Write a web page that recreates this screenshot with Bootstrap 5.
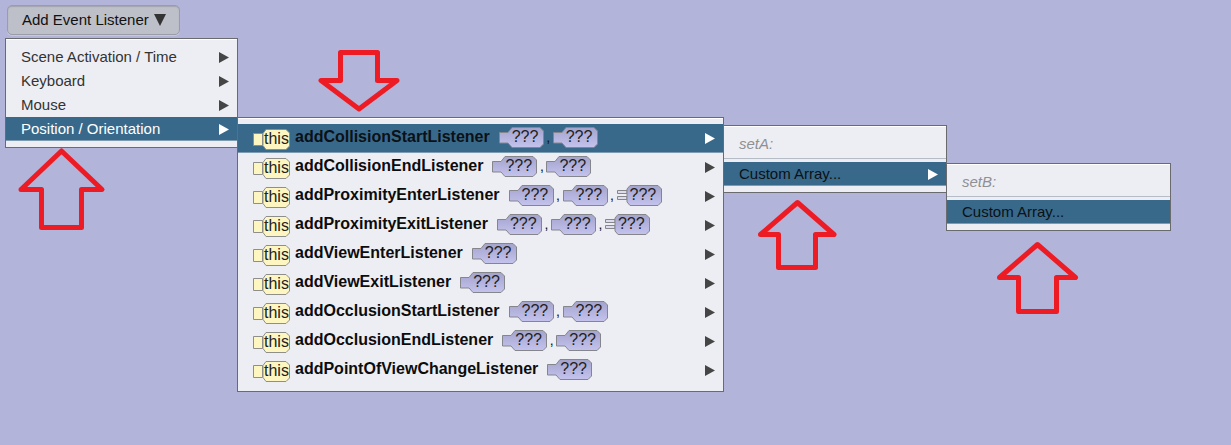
<!DOCTYPE html>
<html lang="en">
<head>
<meta charset="utf-8">
<meta name="viewport" content="width=device-width, initial-scale=1">
<title>Add Event Listener</title>
<link href="https://cdn.jsdelivr.net/npm/bootstrap@5.3.0/dist/css/bootstrap.min.css" rel="stylesheet">
<style>
  body { background: #b2b4da; font: 15px/24px "Liberation Sans", Arial, sans-serif; color: #333; }
  .workspace { padding: 5px; min-height: 100vh; }
  .event-btn { --bs-btn-padding-x: 14px; --bs-btn-padding-y: 0; --bs-btn-font-size: 15px; --bs-btn-line-height: 28px;
    --bs-btn-color: #111; --bs-btn-bg: #bdc0c9; --bs-btn-border-color: #9a9ca6; --bs-btn-border-radius: 5px;
    margin: 0 2px 3px; padding-right: 13px; gap: 5px; box-shadow: inset 0 1px 1px #a3a5ae, 0 1px 0 #c6c8e4; }
  .cascade { flex: none; padding: 6px 0; background: #edeef3; border: 1px solid #6a6b6e;
    box-shadow: inset 0 1px 0 #fff; }
  .cascade + .cascade { margin-left: -1px; }
  .cascade-root { width: 233px; }
  .cascade-listeners { width: 487px; margin-top: 79px; }
  .cascade-set-a { width: 224px; margin-top: 87px; }
  .cascade-set-b { width: 225px; margin-top: 125px; }
  .cascade .dropdown-item { display: flex; align-items: center; padding: 0 8px 0 15px; height: 24px; color: #333; }
  .cascade .dropdown-item:hover { background: #39698a; }
  .cascade .dropdown-item.active { background: #39698a; color: #fff; box-shadow: inset 0 -1px 0 #7d9bb1; }
  .cascade .dropdown-item.active.dark-label { color: #0b1116; }
  .cascade .dropdown-item.active .tri { fill: #fff; }
  .set-title { height: 24px; padding-left: 15px; font-style: italic; color: #8f9093; }
  .cascade hr { height: 1px; margin: 2px 0 3px; border: 0; background: #b5bcc6; opacity: 1; }
  .tri { flex: none; margin-left: auto; fill: #454545; }
  .listener-list { display: grid; grid-auto-rows: 1fr; min-height: 273px; }
  .cascade.listener-list .dropdown-item { height: 100%; font-size: 16px; line-height: 20px; color: #0c0c0c; }
  .expr { display: flex; align-items: center; padding-bottom: 3px; }
  .fn-name { margin: 0 9px 0 4px; font-weight: 700; }
  .sep { width: 9px; text-align: center; font-size: 14px; }
  .chip { position: relative; flex: none; width: 45px; height: 21px; padding-left: 13px; text-align: left; color: #222; }
  .chip svg { position: absolute; inset: 0; width: 100%; height: 100%; }
  .chip span { position: relative; }
  .chip-this { width: 38px; padding-left: 11px; margin-top: 5px; }
  .pointer { position: absolute; fill: none; stroke: #ed1c24; stroke-width: 5; stroke-linejoin: round; pointer-events: none; }
  .pointer-root { left: 18px; top: 147px; }
  .pointer-listener { left: 318px; top: 49px; }
  .pointer-a { left: 757px; top: 199px; }
  .pointer-b { left: 996px; top: 241px; }
</style>
</head>
<body>
<svg width="0" height="0" class="position-absolute" aria-hidden="true">
  <defs>
    <linearGradient id="slotFill" x1="0" y1="0" x2="0" y2="1"><stop offset="0" stop-color="#a3a3cc"/><stop offset="1" stop-color="#c3c3ee"/></linearGradient>
    <symbol id="slot" viewBox="0 0 45 21"><path d="M.5 5.500H9L13 .5H41L44.500 4V17L41 20.500H13L9 16H.5Z" fill="url(#slotFill)" stroke="#85858c"/></symbol>
    <symbol id="slotNum" viewBox="0 0 45 21"><path d="M.5 5.500H10V8.500H.5ZM.5 11.500H10V14.500H.5Z" fill="#dcdcea" stroke="#85858c"/><path d="M13 .5H41L44.500 4V17L41 20.500H13L10 17V4Z" fill="url(#slotFill)" stroke="#85858c"/></symbol>
    <symbol id="self" viewBox="0 0 38 21"><path d="M.5 4.500H9.500V16.500H.5Z" fill="#fdf6c0" stroke="#8e8e8a"/><path d="M13 .5H33L36.500 4V17L33 20.500H13L10 16.500V4.500Z" fill="#fdf6c0" stroke="#8e8e8a"/></symbol>
    <symbol id="tri" viewBox="0 0 10 11"><path d="M0 0L10 5.500L0 11Z"/></symbol>
  </defs>
</svg>

<main class="workspace position-relative">
  <button type="button" class="btn event-btn d-flex align-items-center">Add Event Listener
    <svg width="12" height="12" viewBox="0 0 12 12" fill="#333" aria-hidden="true"><path d="M0 0H12L6 12Z"/></svg>
  </button>

  <div class="d-flex align-items-start">
    <ul class="cascade cascade-root list-unstyled mb-0">
      <li><button type="button" class="dropdown-item">Scene Activation / Time<svg class="tri" width="10" height="11"><use href="#tri"/></svg></button></li>
      <li><button type="button" class="dropdown-item">Keyboard<svg class="tri" width="10" height="11"><use href="#tri"/></svg></button></li>
      <li><button type="button" class="dropdown-item">Mouse<svg class="tri" width="10" height="11"><use href="#tri"/></svg></button></li>
      <li><button type="button" class="dropdown-item active">Position / Orientation<svg class="tri" width="10" height="11"><use href="#tri"/></svg></button></li>
    </ul>

    <ul class="cascade cascade-listeners listener-list list-unstyled mb-0">
      <li><button type="button" class="dropdown-item active dark-label"><span class="expr"><span class="chip chip-this"><svg><use href="#self"/></svg><span>this</span></span><span class="fn-name">addCollisionStartListener</span><span class="chip"><svg><use href="#slot"/></svg><span>???</span></span><span class="sep">,</span><span class="chip"><svg><use href="#slot"/></svg><span>???</span></span></span><svg class="tri" width="10" height="11"><use href="#tri"/></svg></button></li>
      <li><button type="button" class="dropdown-item"><span class="expr"><span class="chip chip-this"><svg><use href="#self"/></svg><span>this</span></span><span class="fn-name">addCollisionEndListener</span><span class="chip"><svg><use href="#slot"/></svg><span>???</span></span><span class="sep">,</span><span class="chip"><svg><use href="#slot"/></svg><span>???</span></span></span><svg class="tri" width="10" height="11"><use href="#tri"/></svg></button></li>
      <li><button type="button" class="dropdown-item"><span class="expr"><span class="chip chip-this"><svg><use href="#self"/></svg><span>this</span></span><span class="fn-name">addProximityEnterListener</span><span class="chip"><svg><use href="#slot"/></svg><span>???</span></span><span class="sep">,</span><span class="chip"><svg><use href="#slot"/></svg><span>???</span></span><span class="sep">,</span><span class="chip"><svg><use href="#slotNum"/></svg><span>???</span></span></span><svg class="tri" width="10" height="11"><use href="#tri"/></svg></button></li>
      <li><button type="button" class="dropdown-item"><span class="expr"><span class="chip chip-this"><svg><use href="#self"/></svg><span>this</span></span><span class="fn-name">addProximityExitListener</span><span class="chip"><svg><use href="#slot"/></svg><span>???</span></span><span class="sep">,</span><span class="chip"><svg><use href="#slot"/></svg><span>???</span></span><span class="sep">,</span><span class="chip"><svg><use href="#slotNum"/></svg><span>???</span></span></span><svg class="tri" width="10" height="11"><use href="#tri"/></svg></button></li>
      <li><button type="button" class="dropdown-item"><span class="expr"><span class="chip chip-this"><svg><use href="#self"/></svg><span>this</span></span><span class="fn-name">addViewEnterListener</span><span class="chip"><svg><use href="#slot"/></svg><span>???</span></span></span><svg class="tri" width="10" height="11"><use href="#tri"/></svg></button></li>
      <li><button type="button" class="dropdown-item"><span class="expr"><span class="chip chip-this"><svg><use href="#self"/></svg><span>this</span></span><span class="fn-name">addViewExitListener</span><span class="chip"><svg><use href="#slot"/></svg><span>???</span></span></span><svg class="tri" width="10" height="11"><use href="#tri"/></svg></button></li>
      <li><button type="button" class="dropdown-item"><span class="expr"><span class="chip chip-this"><svg><use href="#self"/></svg><span>this</span></span><span class="fn-name">addOcclusionStartListener</span><span class="chip"><svg><use href="#slot"/></svg><span>???</span></span><span class="sep">,</span><span class="chip"><svg><use href="#slot"/></svg><span>???</span></span></span><svg class="tri" width="10" height="11"><use href="#tri"/></svg></button></li>
      <li><button type="button" class="dropdown-item"><span class="expr"><span class="chip chip-this"><svg><use href="#self"/></svg><span>this</span></span><span class="fn-name">addOcclusionEndListener</span><span class="chip"><svg><use href="#slot"/></svg><span>???</span></span><span class="sep">,</span><span class="chip"><svg><use href="#slot"/></svg><span>???</span></span></span><svg class="tri" width="10" height="11"><use href="#tri"/></svg></button></li>
      <li><button type="button" class="dropdown-item"><span class="expr"><span class="chip chip-this"><svg><use href="#self"/></svg><span>this</span></span><span class="fn-name">addPointOfViewChangeListener</span><span class="chip"><svg><use href="#slot"/></svg><span>???</span></span></span><svg class="tri" width="10" height="11"><use href="#tri"/></svg></button></li>
    </ul>

    <div class="cascade cascade-set-a">
      <div class="set-title">setA:</div>
      <hr>
      <button type="button" class="dropdown-item active dark-label">Custom Array...<svg class="tri" width="10" height="11"><use href="#tri"/></svg></button>
    </div>

    <div class="cascade cascade-set-b">
      <div class="set-title">setB:</div>
      <hr>
      <button type="button" class="dropdown-item active dark-label">Custom Array...</button>
    </div>
  </div>

  <svg class="pointer pointer-root" width="88" height="84" aria-hidden="true"><path d="M43.500 4L84 42.500H63.500V80.500H23.500V42.500H3Z"/></svg>
  <svg class="pointer pointer-listener" width="84" height="64" aria-hidden="true"><path d="M22.500 3.500H59.500V31.500H79L41 60L3 31.500H22.500Z"/></svg>
  <svg class="pointer pointer-a" width="82" height="72" aria-hidden="true"><path d="M40.500 3.500L77 35.500H58.500V68.500H21.500V35.500H3.500Z"/></svg>
  <svg class="pointer pointer-b" width="84" height="74" aria-hidden="true"><path d="M41.500 3.500L79.500 36.500H60.500V70.500H22.500V36.500H3.500Z"/></svg>
</main>
<script src="https://cdn.jsdelivr.net/npm/bootstrap@5.3.0/dist/js/bootstrap.bundle.min.js"></script>
</body>
</html>
